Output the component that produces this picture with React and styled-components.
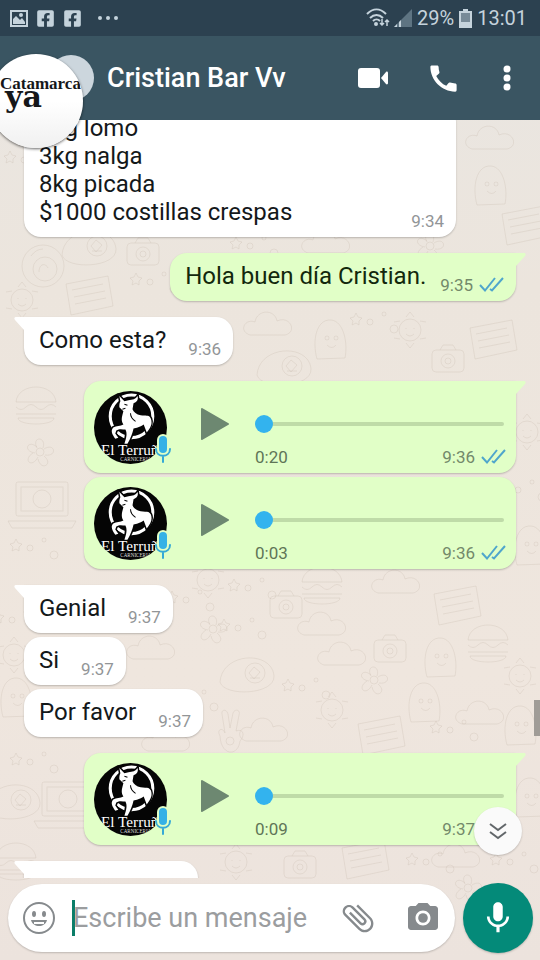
import React, { useState } from 'react';
import styled, { createGlobalStyle } from 'styled-components';
import { FaFacebookSquare } from 'react-icons/fa';
import { MdAttachFile, MdCall, MdCameraAlt, MdMic } from 'react-icons/md';

const GlobalStyle = createGlobalStyle`
  * {
    box-sizing: border-box;
  }

  body {
    margin: 0;
    font-family: Roboto, 'Liberation Sans', sans-serif;
    color: #14181a;
  }

  button {
    display: flex;
    align-items: center;
    justify-content: center;
    padding: 0;
    border: 0;
    background: none;
    cursor: pointer;
  }
`;

const Screen = styled.div`
  position: relative;
  display: flex;
  flex-direction: column;
  height: 100vh;
  overflow: hidden;
  background: linear-gradient(#e9e6e2, #ece5dd 30%, #efe6de 70%, #ece3dd);
`;

const WallpaperSvg = styled.svg`
  position: absolute;
  inset: 0;
  width: 100%;
  height: 100%;
`;

const StatusBar = styled.div`
  position: relative;
  display: flex;
  align-items: center;
  justify-content: space-between;
  height: 36px;
  padding: 0 13px 0 10px;
  background: #2c4150;
  color: #c5d3dc;
  font-size: 20px;
`;

const StatusGroup = styled.div`
  display: flex;
  align-items: center;
  gap: ${(props) => props.$gap}px;
`;

const AppBar = styled.header`
  position: relative;
  display: flex;
  align-items: center;
  height: 84px;
  padding: 0 13px 0 48px;
  background: #3a5562;
  color: #ffffff;
`;

const ContactPhoto = styled.div`
  width: 46px;
  height: 46px;
  border-radius: 50%;
  background: #ccd6dd;
`;

const ContactName = styled.h1`
  flex: 1;
  margin: 0 0 0 13px;
  font-size: 27px;
  font-weight: 500;
  line-height: 30px;
`;

const BarActions = styled.div`
  display: flex;
  align-items: center;
  gap: 38px;
`;

const BarButton = styled.button`
  color: #ffffff;
`;

const FloatingHead = styled.button`
  position: absolute;
  z-index: 2;
  top: 54px;
  left: -11px;
  width: 94px;
  height: 94px;
  border-radius: 50%;
  overflow: hidden;
  background: linear-gradient(#ffffff 50%, #f0f0f0);
  box-shadow: 0 1px 3px rgba(0, 0, 0, 0.6);
`;

const Chat = styled.main`
  position: relative;
  display: flex;
  flex: 1;
  flex-direction: column;
  min-height: 0;
  overflow: hidden;
`;

const Thread = styled.div`
  display: flex;
  flex-direction: column;
  margin-top: -19px;
`;

const Bubble = styled.div`
  position: relative;
  flex-shrink: 0;
  align-self: ${(props) => (props.$out ? 'flex-end' : 'flex-start')};
  display: flex;
  align-items: flex-end;
  justify-content: space-between;
  width: ${(props) => (props.$wide ? '80%' : 'auto')};
  margin: ${(props) => (props.$first ? '16px' : '4px')} 24px 0;
  padding: 9px 12px 6px 15px;
  border-radius: 17px;
  border-top-left-radius: ${(props) => (props.$first && !props.$out ? 0 : 17)}px;
  border-top-right-radius: ${(props) => (props.$first && props.$out ? 0 : 17)}px;
  background: ${(props) => (props.$out ? '#e1ffc7' : '#ffffff')};
  color: ${(props) => (props.$out ? '#12280c' : '#14181a')};
  box-shadow: 0 1px 2px rgba(0, 0, 0, 0.22);
`;

const Tail = styled.svg`
  position: absolute;
  top: 0;
  ${(props) => (props.$out ? 'right: -10px;' : 'left: -10px; transform: scaleX(-1);')}
  color: ${(props) => (props.$out ? '#e1ffc7' : '#ffffff')};
`;

const MessageText = styled.p`
  margin: 0;
  padding-bottom: 5px;
  font-size: 24px;
  line-height: 28px;
  white-space: pre-line;
`;

const Meta = styled.span`
  display: flex;
  align-items: center;
  gap: 6px;
  margin-left: ${(props) => (props.$out ? 14 : 22)}px;
  font-size: 17px;
  line-height: 20px;
  color: ${(props) => (props.$out ? '#73896a' : '#929597')};
`;

const VoiceBubble = styled(Bubble)`
  align-items: flex-start;
  padding: 10px 12px 6px 10px;
`;

const VoicePhoto = styled.div`
  position: relative;
  width: 73px;
  height: 73px;
`;

const VoiceMic = styled.svg`
  position: absolute;
  right: -4px;
  bottom: 0;
`;

const PlayButton = styled.button`
  width: 36px;
  height: 36px;
  margin: 15px 22px 0 30px;
`;

const VoiceBody = styled.div`
  flex: 1;
  padding-top: 23px;
`;

const VoiceSlider = styled.input`
  display: block;
  width: 100%;
  height: 20px;
  margin: 0 0 13px;
  appearance: none;
  background: none;

  &::-webkit-slider-runnable-track {
    height: 4px;
    border-radius: 2px;
    background: #bfdba8;
  }

  &::-webkit-slider-thumb {
    width: 18px;
    height: 18px;
    margin-top: -7px;
    appearance: none;
    border-radius: 50%;
    background: #33b3ee;
  }
`;

const VoiceFooter = styled.div`
  display: flex;
  justify-content: space-between;
  margin-right: -2px;
  font-size: 17px;
  line-height: 20px;
  color: #5f7557;
`;

const ScrollThumb = styled.div`
  position: absolute;
  top: 580px;
  right: 0;
  width: 6px;
  height: 36px;
  background: #a09c97;
`;

const JumpButton = styled.button`
  position: absolute;
  right: 18px;
  bottom: 23px;
  width: 48px;
  height: 48px;
  border-radius: 50%;
  background: #fafafa;
  box-shadow: 0 1px 2px rgba(0, 0, 0, 0.2);
`;

const Composer = styled.form`
  position: relative;
  display: flex;
  align-items: center;
  gap: 8px;
  padding: 5px 7px 7px 8px;
`;

const InputPill = styled.div`
  display: flex;
  flex: 1;
  align-items: center;
  min-width: 0;
  height: 68px;
  padding: 0 14px;
  border-radius: 34px;
  background: #ffffff;
  box-shadow: 0 1px 2px rgba(0, 0, 0, 0.2);
`;

const PillButton = styled.button`
  flex-shrink: 0;
  color: #868a8d;
`;

const Caret = styled.span`
  flex-shrink: 0;
  width: 3px;
  height: 36px;
  margin-left: 16px;
  background: #0b7d68;
`;

const MessageInput = styled.input`
  flex: 1;
  min-width: 0;
  margin-left: -2px;
  padding: 0;
  border: 0;
  outline: 0;
  background: none;
  font-family: inherit;
  font-size: 27px;
  line-height: 32px;

  &::placeholder {
    color: #9b9d9f;
    opacity: 1;
  }
`;

const PillActions = styled.div`
  display: flex;
  flex-shrink: 0;
  align-items: center;
  gap: 28px;
`;

const ClipIcon = styled(MdAttachFile)`
  transform: rotate(-45deg);
`;

const RecordButton = styled.button`
  flex-shrink: 0;
  width: 70px;
  height: 70px;
  border-radius: 50%;
  background: #048a79;
  color: #ffffff;
  box-shadow: 0 1px 2px rgba(0, 0, 0, 0.2);
`;

// Line drawings repeated over the chat background
const doodles = {
  flower: (
    <>
      <circle r="4" />
      <path d="M-3-4c-6-12 10-12 6 0M4-3c11-7 14 8 1 6M4 4c10 8-3 16-6 3M-2 5c-6 12-16 3-5-4M-5 1c-13-2-7-14 2-6" />
    </>
  ),
  egg: (
    <>
      <path d="M-28 9c2-30 52-32 54-6 1 19-50 21-54 6z" />
      <circle cx="7" r="10" />
      <path d="M1 0l5-6 6 5-6 7zM2 5h10" />
    </>
  ),
  sun: (
    <>
      <circle r="11" />
      <path d="M-4-2v1M4-2v1M-4 4q4 4 8 0M0-18l4 5M0-18l-4 5M16-8l-6-1M16 8l-6 1M0 18l4-5M0 18l-4-5M-16 8l6 1M-16-8l6-1" />
    </>
  ),
  hand: (
    <>
      <path d="M-10 4c-4-7 3-9 5-3l-3-19c-1-5 5-5 6 0l2 14 3-15c2-5 8-3 6 2l-3 16c8-3 9 5 4 10-2 16-19 15-20-5z" />
      <circle cy="9" r="4" />
    </>
  ),
  camera: (
    <>
      <rect x="-16" y="-10" width="32" height="22" rx="4" />
      <circle r="7" cy="1" />
      <circle r="3" cy="1" />
      <path d="M-8-10l3-5H5l3 5" />
    </>
  ),
  bulb: (
    <>
      <circle r="21" />
      <circle r="12" cx="2" cy="3" />
      <path d="M-4 6c0-9 7-9 9-4M-12-10q5-7 12-7" />
    </>
  ),
  cloud: <path d="M-22 9c-12-4-5-17 5-13 2-13 20-13 22-1 13-6 21 11 8 14z" />,
  house: (
    <>
      <path d="M-22-12l42-8 5 30-42 9z" />
      <path d="M-16-6l31-6M-14 1l31-6M-13 8l31-6" />
    </>
  ),
  burger: (
    <>
      <path d="M-20-4c2-20 38-20 40 0z" />
      <path d="M-20 1q5 5 10 0t10 0 10 0 10 0M-20 8h40M-18 12c0 8 36 8 36 0z" />
    </>
  ),
  ghost: (
    <>
      <path d="M-13 17c-5-18-1-40 14-39 13 1 17 24 14 38z" />
      <circle cx="-3" cy="-4" r="2" />
      <circle cx="6" cy="-4" r="2" />
      <path d="M-3 3q5 5 9 0" />
    </>
  ),
  monitor: (
    <>
      <rect x="-26" y="-20" width="52" height="34" rx="2" />
      <rect x="-21" y="-15" width="42" height="24" />
      <circle r="9" cy="-3" />
      <path d="M-34 19h68l-4 7h-60z" />
    </>
  ),
  dots: (
    <>
      <circle r="3" />
      <circle r="2" cx="14" cy="-8" />
      <circle r="4" cx="24" cy="7" />
      <path d="M-14-9l2 4 4 1-3 3 0 4-3-2-4 2 1-4-3-3 4-1z" />
    </>
  ),
};

const wallpaper = [
  ['dots', 24, 160], ['cloud', 494, 140], ['house', 524, 226], ['ghost', 490, 188],
  ['bulb', 43, 266], ['camera', 143, 253], ['egg', 90, 246], ['sun', 22, 300], ['house', 88, 296],
  ['dots', 250, 246], ['cloud', 330, 244], ['flower', 430, 246], ['dots', 150, 282],
  ['cloud', 272, 326], ['ghost', 330, 342], ['house', 492, 340], ['sun', 410, 330], ['dots', 370, 322],
  ['egg', 285, 366], ['camera', 448, 360], ['burger', 36, 406], ['flower', 40, 452],
  ['monitor', 42, 502], ['dots', 30, 548], ['sun', 527, 432], ['dots', 518, 490], ['ghost', 530, 548],
  ['sun', 208, 580], ['dots', 248, 588], ['burger', 322, 586], ['cloud', 400, 584], ['house', 456, 606],
  ['flower', 213, 629], ['camera', 286, 606], ['cloud', 326, 626], ['dots', 238, 628], ['cloud', 155, 650],
  ['egg', 248, 673], ['cloud', 346, 656], ['camera', 390, 650], ['burger', 488, 644], ['ghost', 440, 660],
  ['dots', 302, 688], ['sun', 332, 710], ['ghost', 424, 705], ['flower', 374, 680], ['sun', 520, 676],
  ['hand', 230, 732], ['cloud', 268, 732], ['house', 380, 736], ['ghost', 16, 700], ['dots', 450, 730],
  ['cloud', 484, 715], ['ghost', 520, 728], ['dots', 30, 762], ['monitor', 68, 802], ['egg', 14, 800],
  ['house', 364, 860], ['camera', 300, 866], ['dots', 426, 862], ['sun', 236, 862], ['cloud', 460, 858],
  ['ghost', 530, 800], ['dots', 510, 862], ['burger', 16, 862], ['flower', 468, 888],
  ['dots', 12, 620], ['sun', 14, 655], ['cloud', 170, 742], ['dots', 186, 600], ['dots', 190, 700],
];

function Wallpaper() {
  return (
    <WallpaperSvg aria-hidden="true" fill="none" stroke="#c9bdb0" strokeOpacity="0.32">
      {wallpaper.map(([name, x, y], index) => (
        <g key={index} transform={`translate(${x} ${y})`}>
          {doodles[name]}
        </g>
      ))}
    </WallpaperSvg>
  );
}

function Ticks() {
  return (
    <svg width="25" height="18" viewBox="0 0 25 18" fill="none" stroke="#4fa6cc" strokeWidth="2">
      <path d="M1 9l5 5.500L16 2M11 13l2 1.500L24 2" />
    </svg>
  );
}

function BullLogo() {
  return (
    <svg width="73" height="73" viewBox="0 0 72 72" aria-hidden="true">
      <defs>
        <clipPath id="photo">
          <circle cx="36" cy="36" r="36" />
        </clipPath>
      </defs>
      <g clipPath="url(#photo)">
        <rect width="72" height="72" fill="#050505" />
        <circle cx="37" cy="25" r="21" fill="none" stroke="#fff" strokeWidth="3" />
        <path
          d="M25 5l5 5 4-1c4 0 7-1 9-4 1 4-1 6-4 7l-1 6c1 3 4 5 8 6 5 1 8-1 10 3 2 5 0 9-4 14l-3-8c-4 3-7 3-10 4-1 5-3 10-6 15h-3c2-6 3-10 1-14-3 0-6-1-9 1l-1 3 3 4-3 1c-3-4-5-8-2-11 3-2 7-1 10-3-3-4-1-9 0-13l-4-4c0-3 0-4 1-6z"
          fill="#fff"
          stroke="#050505"
          strokeWidth="3"
          paintOrder="stroke"
        />
        <path d="M30 13l3 1M28 18l3-1M36 22c0 4 2 6 5 8" stroke="#050505" fill="none" />
        <text x="7" y="63" fontFamily="Liberation Serif" fontSize="15" fill="#fff">
          El Terruñ
        </text>
        <text x="26" y="69" fontFamily="Liberation Serif" fontSize="5" fill="#ddd">
          CARNICERIA
        </text>
      </g>
    </svg>
  );
}

function VoiceMessage({ first, length, time, label }) {
  const [position, setPosition] = useState(0);

  return (
    <VoiceBubble $out $wide $first={first}>
      {first && <BubbleTail out />}
      <VoicePhoto>
        <BullLogo />
        <VoiceMic width="16" height="31" viewBox="0 0 16 31" fill="none" strokeLinecap="round">
          <path d="M8 7v9" stroke="#e1ffc7" strokeWidth="12" />
          <path d="M8 7v9" stroke="#35b1e6" strokeWidth="8" />
          <path d="M1 16c0 9 14 9 14 0M8 23v6" stroke="#e1ffc7" strokeWidth="4" />
          <path d="M1 16c0 9 14 9 14 0M8 23v6" stroke="#35a9d6" strokeWidth="2" />
        </VoiceMic>
      </VoicePhoto>
      <PlayButton type="button" aria-label="Reproducir">
        <svg width="30" height="34" viewBox="0 0 30 34">
          <path d="M2 2l26 15L2 32z" fill="#6d8871" stroke="#6d8871" strokeWidth="2" strokeLinejoin="round" />
        </svg>
      </PlayButton>
      <VoiceBody>
        <VoiceSlider
          type="range"
          min="0"
          max="100"
          value={position}
          aria-label={label}
          onChange={(e) => setPosition(Number(e.target.value))}
        />
        <VoiceFooter>
          <span>{length}</span>
          <Meta $out>
            {time}
            <Ticks />
          </Meta>
        </VoiceFooter>
      </VoiceBody>
    </VoiceBubble>
  );
}

function BubbleTail({ out }) {
  return (
    <Tail $out={out} width="13" height="16" viewBox="0 0 13 16" aria-hidden="true">
      <path d="M0 0h11c2 0 2 2 1 3L3 13v3H0z" fill="currentColor" />
    </Tail>
  );
}

function TextMessage({ out, first, wide, time, children }) {
  return (
    <Bubble $out={out} $first={first} $wide={wide}>
      {first && <BubbleTail out={out} />}
      <MessageText>{children}</MessageText>
      <Meta $out={out}>
        {time}
        {out && <Ticks />}
      </Meta>
    </Bubble>
  );
}

export default function App() {
  const [draft, setDraft] = useState('');

  return (
    <Screen>
      <GlobalStyle />
      <Wallpaper />

      <StatusBar>
        <StatusGroup $gap={8}>
          <svg width="18" height="17" viewBox="0 0 18 17" fill="#c5d3dc">
            <path d="M0 0h18v17H0zM2 2v13h14V2z" fillRule="evenodd" />
            <path d="M3 14V9l3-3 4 4 2-2 3 4v2z" />
            <circle cx="11" cy="5" r="2" />
          </svg>
          <FaFacebookSquare size={19} />
          <FaFacebookSquare size={19} />
          <svg width="34" height="6" viewBox="0 0 34 6" fill="#c5d3dc">
            <circle cx="10" cy="3" r="2" />
            <circle cx="18" cy="3" r="2" />
            <circle cx="26" cy="3" r="2" />
          </svg>
        </StatusGroup>
        <StatusGroup $gap={5}>
          <svg width="46" height="20" viewBox="0 0 46 20" fill="none" stroke="#c5d3dc" strokeWidth="2">
            <path d="M1 6c6-6 13-6 19 0M4 10c4-4 9-4 13 0M7 13c2-2 5-2 7 0" />
            <circle cx="10" cy="16" r="1" />
            <path d="M16 11v6M14 15l2 2 2-2M21 18v-6M19 14l2-2 2 2" strokeWidth="1.500" />
            <path d="M28 19L46 1v18z" fill="#5e7482" stroke="none" />
            <path d="M28 19l3-3v3zM33 19v-5l2-2v7z" fill="#c5d3dc" stroke="none" />
          </svg>
          <span>29%</span>
          <svg width="13" height="19" viewBox="0 0 13 19">
            <path d="M4 0h5v2h4v17H0V2h4z" fill="#c5d3dc" />
            <path d="M2 4h9v9H2z" fill="#788b98" />
          </svg>
          <span>13:01</span>
        </StatusGroup>
      </StatusBar>

      <AppBar>
        <ContactPhoto />
        <ContactName>Cristian Bar Vv</ContactName>
        <BarActions>
          <BarButton type="button" aria-label="Videollamada">
            <svg width="30" height="22" viewBox="0 0 30 22" fill="currentColor">
              <rect y="1" width="22" height="20" rx="3" />
              <path d="M23 11l5-6c1-1 2 0 2 1v10c0 1-1 2-2 1z" />
            </svg>
          </BarButton>
          <BarButton type="button" aria-label="Llamar">
            <MdCall size={35} />
          </BarButton>
          <BarButton type="button" aria-label="Más opciones">
            <svg width="28" height="26" viewBox="0 0 28 26" fill="currentColor">
              <circle cx="8" cy="4" r="3.500" />
              <circle cx="8" cy="13" r="3.500" />
              <circle cx="8" cy="22" r="3.500" />
            </svg>
          </BarButton>
        </BarActions>
      </AppBar>

      <FloatingHead type="button" aria-label="Catamarca ya">
        <svg width="94" height="94" viewBox="0 0 94 94" fill="#15171a">
          <text x="11" y="35" fontFamily="Liberation Serif" fontWeight="700" fontSize="17">
            Catamarca
          </text>
          <text x="16" y="53" fontFamily="DejaVu Serif" fontWeight="700" fontSize="30">
            ya
          </text>
        </svg>
      </FloatingHead>

      <Chat>
        <Thread>
          <TextMessage wide time="9:34">
            {'2kg lomo\n3kg nalga\n8kg picada\n$1000 costillas crespas'}
          </TextMessage>
          <TextMessage out first time="9:35">Hola buen día Cristian.</TextMessage>
          <TextMessage first time="9:36">Como esta?</TextMessage>
          <VoiceMessage first length="0:20" time="9:36" label="Mensaje de voz 0:20" />
          <VoiceMessage length="0:03" time="9:36" label="Mensaje de voz 0:03" />
          <TextMessage first time="9:37">Genial</TextMessage>
          <TextMessage time="9:37">Si</TextMessage>
          <TextMessage time="9:37">Por favor</TextMessage>
          <VoiceMessage first length="0:09" time="9:37" label="Mensaje de voz 0:09" />
          <TextMessage first time="">{'\u00a0'.repeat(21)}</TextMessage>
        </Thread>
        <ScrollThumb />
        <JumpButton type="button" aria-label="Ir al final">
          <svg width="20" height="18" viewBox="0 0 20 18" fill="none" stroke="#62676a" strokeWidth="2">
            <path d="M2 2l8 6 8-6M2 10l8 6 8-6" />
          </svg>
        </JumpButton>
      </Chat>

      <Composer onSubmit={(e) => e.preventDefault()}>
        <InputPill>
          <PillButton type="button" aria-label="Emoji">
            <svg width="34" height="34" viewBox="0 0 34 34" fill="none" stroke="currentColor" strokeWidth="2">
              <circle cx="17" cy="17" r="15" />
              <path d="M9 19h16c-2 8-14 8-16 0z" fill="currentColor" stroke="none" />
              <path d="M12 22h10" stroke="#fff" />
              <ellipse cx="12" cy="13" rx="2" ry="3" fill="currentColor" stroke="none" />
              <ellipse cx="22" cy="13" rx="2" ry="3" fill="currentColor" stroke="none" />
            </svg>
          </PillButton>
          <Caret />
          <MessageInput
            type="text"
            placeholder="Escribe un mensaje"
            aria-label="Escribe un mensaje"
            value={draft}
            onChange={(e) => setDraft(e.target.value)}
          />
          <PillActions>
            <PillButton type="button" aria-label="Adjuntar">
              <ClipIcon size={38} />
            </PillButton>
            <PillButton type="button" aria-label="Cámara">
              <MdCameraAlt size={36} />
            </PillButton>
          </PillActions>
        </InputPill>
        <RecordButton type="button" aria-label="Grabar mensaje de voz">
          <MdMic size={38} />
        </RecordButton>
      </Composer>
    </Screen>
  );
}
